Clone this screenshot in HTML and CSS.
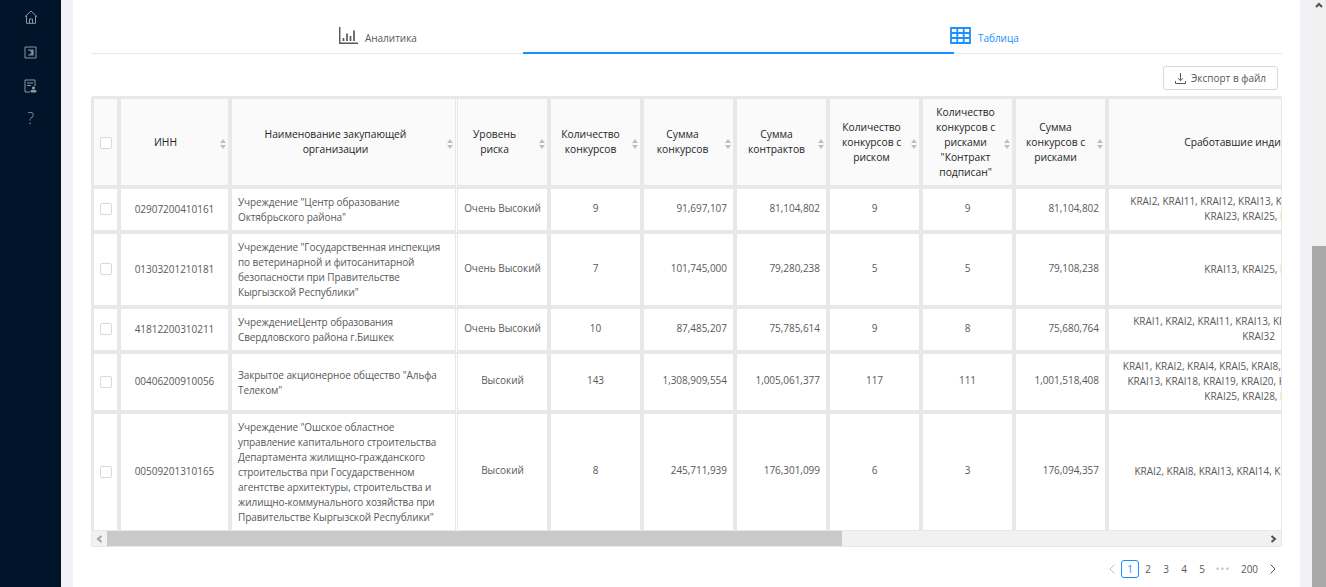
FILE: index.html
```html
<!DOCTYPE html>
<html lang="ru">
<head>
  <meta charset="UTF-8">
  <title>Таблица</title>
  <link rel="stylesheet" href="styles.css">
</head>
<body>
  <aside class="sidebar">
    <a class="side-item first">
      <svg width="14" height="14" viewBox="0 0 14 14" fill="none" stroke="currentColor"><path d="M.8 6.8 7 1l6.2 5.8M2.5 5.5v7.8h9V5.5M5.5 13.3V9h3v4.3"/></svg>
    </a>
    <a class="side-item">
      <svg width="13" height="13" viewBox="0 0 13 13" fill="none" stroke="currentColor"><path d="M1 1h11v11H1z"/><path d="M4 4h5v5H4M6.5 4.5 8.5 6.5 6.5 8.5" stroke-width="1.2"/></svg>
    </a>
    <a class="side-item">
      <svg width="13" height="14" viewBox="0 0 13 14" fill="none" stroke="currentColor"><path d="M6 13H1V1h10v6"/><path d="M3 4h6M3 6.5h4"/><circle cx="9.5" cy="9" r="1.2" fill="currentColor"/><path d="M7 13h5v-1.5H7z" fill="currentColor"/></svg>
    </a>
    <a class="side-item question">?</a>
  </aside>

  <main class="main">
    <div class="card">
      <nav class="tabs">
        <div class="tab tab-analytics">
          <svg width="19" height="17" viewBox="0 0 19 17" fill="none" stroke="currentColor"><path d="M.7 0v16.3H19" stroke-width="1.5"/><path d="M4.5 14V11M8 14V6.5M11.5 14V9M15 14V3.5" stroke-width="1.7"/></svg>
          <span>Аналитика</span>
        </div>
        <div class="tab tab-active">
          <svg width="21" height="17" viewBox="0 0 21 17" fill="none" stroke="currentColor"><path d="M1 1h19v15H1zM1 6h19M1 11h19M7.3 1v15M13.7 1v15" stroke-width="1.8"/></svg>
          <span>Таблица</span>
        </div>
        <div class="ink-bar"></div>
      </nav>

      <div class="toolbar">
        <button class="export-btn">
          <svg width="11" height="11" viewBox="0 0 11 11" fill="none" stroke="currentColor"><path d="M5.5 0v7.5M3 5.2l2.5 2.5L8 5.2M.5 8v2.5h10V8"/></svg>
          Экспорт в файл
        </button>
      </div>

      <div class="table-box">
        <div class="table-clip">
          <table class="data-table">
            <colgroup>
              <col class="col-check"><col class="col-inn"><col class="col-name">
              <col class="col-num"><col class="col-num"><col class="col-num"><col class="col-num"><col class="col-num"><col class="col-num"><col class="col-num">
              <col class="col-ind">
            </colgroup>
            <thead>
              <tr>
                <th><span class="check"></span></th>
                <th class="sortable pad-24">ИНН<span class="sorter"></span></th>
                <th class="sortable two-line name">Наименование закупающей организации<span class="sorter"></span></th>
                <th class="sortable two-line">Уровень риска<span class="sorter"></span></th>
                <th class="sortable two-line pad-16">Количество конкурсов<span class="sorter"></span></th>
                <th class="sortable two-line pad-18">Сумма конкурсов<span class="sorter"></span></th>
                <th class="sortable two-line pad-16">Сумма контрактов<span class="sorter"></span></th>
                <th class="sortable pad-12">Количество конкурсов с риском<span class="sorter"></span></th>
                <th class="sortable pad-10">Количество конкурсов с рисками "Контракт подписан"<span class="sorter"></span></th>
                <th class="sortable pad-16">Сумма конкурсов с рисками<span class="sorter"></span></th>
                <th class="pad-22">Сработавшие индикаторы</th>
              </tr>
            </thead>
            <tbody>
              <tr>
                <td><span class="check"></span></td>
                <td class="inn">02907200410161</td>
                <td class="name">Учреждение "Центр образование Октябрьского района"</td>
                <td class="center">Очень Высокий</td>
                <td class="center">9</td>
                <td class="right">91,697,107</td>
                <td class="right">81,104,802</td>
                <td class="center">9</td>
                <td class="center">9</td>
                <td class="right">81,104,802</td>
                <td class="ind">KRAI2, KRAI11, KRAI12, KRAI13, KRAI17, KRAI19, KRAI22,<br>KRAI23, KRAI25, KRAI28</td>
              </tr>
              <tr>
                <td><span class="check"></span></td>
                <td class="inn">01303201210181</td>
                <td class="name">Учреждение "Государственная инспекция по ветеринарной и фитосанитарной безопасности при Правительстве Кыргызской Республики"</td>
                <td class="center">Очень Высокий</td>
                <td class="center">7</td>
                <td class="right">101,745,000</td>
                <td class="right">79,280,238</td>
                <td class="center">5</td>
                <td class="center">5</td>
                <td class="right">79,108,238</td>
                <td class="ind">KRAI13, KRAI25, KRAI28</td>
              </tr>
              <tr>
                <td><span class="check"></span></td>
                <td class="inn">41812200310211</td>
                <td class="name">УчреждениеЦентр образования Свердловского района г.Бишкек</td>
                <td class="center">Очень Высокий</td>
                <td class="center">10</td>
                <td class="right">87,485,207</td>
                <td class="right">75,785,614</td>
                <td class="center">9</td>
                <td class="center">8</td>
                <td class="right">75,680,764</td>
                <td class="ind">KRAI1, KRAI2, KRAI11, KRAI13, KRAI17, KRAI23, KRAI25,<br>KRAI32</td>
              </tr>
              <tr>
                <td><span class="check"></span></td>
                <td class="inn">00406200910056</td>
                <td class="name">Закрытое акционерное общество "Альфа Телеком"</td>
                <td class="center">Высокий</td>
                <td class="center">143</td>
                <td class="right">1,308,909,554</td>
                <td class="right">1,005,061,377</td>
                <td class="center">117</td>
                <td class="center">111</td>
                <td class="right">1,001,518,408</td>
                <td class="ind">KRAI1, KRAI2, KRAI4, KRAI5, KRAI8, KRAI11, KRAI12, KRAI13,<br>KRAI13, KRAI18, KRAI19, KRAI20, KRAI21, KRAI22, KRAI23,<br>KRAI25, KRAI28, KRAI32</td>
              </tr>
              <tr>
                <td><span class="check"></span></td>
                <td class="inn">00509201310165</td>
                <td class="name">Учреждение "Ошское областное управление капитального строительства Департамента жилищно-гражданского строительства при Государственном агентстве архитектуры, строительства и жилищно-коммунального хозяйства при Правительстве Кыргызской Республики"</td>
                <td class="center">Высокий</td>
                <td class="center">8</td>
                <td class="right">245,711,939</td>
                <td class="right">176,301,099</td>
                <td class="center">6</td>
                <td class="center">3</td>
                <td class="right">176,094,357</td>
                <td class="ind">KRAI2, KRAI8, KRAI13, KRAI14, KRAI17, KRAI23, KRAI25</td>
              </tr>
            </tbody>
          </table>
        </div>
        <div class="h-scroll">
          <span class="h-arrow h-arrow-left">
            <svg width="7" height="8" viewBox="0 0 7 8" fill="none" stroke="currentColor" stroke-width="2"><path d="M5.5 1 2 4l3.5 3"/></svg>
          </span>
          <span class="h-thumb"></span>
          <span class="h-arrow h-arrow-right">
            <svg width="7" height="8" viewBox="0 0 7 8" fill="none" stroke="currentColor" stroke-width="2"><path d="M1.5 1 5 4 1.5 7"/></svg>
          </span>
        </div>
      </div>

      <ul class="pagination">
        <li class="page-arrow disabled">
          <svg width="6" height="10" viewBox="0 0 6 10" fill="none" stroke="currentColor"><path d="M5.5.5 1 5l4.5 4.5"/></svg>
        </li>
        <li class="page current">1</li>
        <li class="page">2</li>
        <li class="page">3</li>
        <li class="page">4</li>
        <li class="page">5</li>
        <li class="page jump">•••</li>
        <li class="page last">200</li>
        <li class="page-arrow">
          <svg width="6" height="10" viewBox="0 0 6 10" fill="none" stroke="currentColor"><path d="M.5.5 5 5 .5 9.5"/></svg>
        </li>
      </ul>
    </div>
  </main>

  <div class="page-scroll">
    <svg class="page-scroll-up" width="8" height="6" viewBox="0 0 8 6" fill="none" stroke="currentColor" stroke-width="2"><path d="M1 5 4 2l3 3"/></svg>
    <div class="page-scroll-thumb"></div>
  </div>
</body>
</html>
```

FILE: styles.css
```css
html, body {
  height: 100%;
}

body {
  margin: 0;
  height: 587px;
  overflow: hidden;
  display: flex;
  font-family: 'Open Sans', sans-serif;
  font-size: 10px;
  line-height: 15px;
  letter-spacing: -0.03px;
  color: #595959;
  background: #f0f2f5;
}

/* left menu */
.sidebar {
  width: 61px;
  flex: none;
  background: #001529;
  color: #8c96a1;
}

.side-item {
  height: 33px;
  display: flex;
  align-items: center;
  justify-content: center;
}

.side-item.first {
  margin-bottom: 3px;
}

.question {
  font-size: 16px;
  font-weight: 300;
}

.main {
  flex: 1;
  padding: 0 12px;
  min-width: 0;
}

.card {
  background: #fff;
  height: 587px;
  padding: 0 18px;
  box-sizing: border-box;
}

/* tabs */
.tabs {
  position: relative;
  height: 54px;
  box-sizing: border-box;
  border-bottom: 1px solid #e8e8e8;
  padding: 27px 0 0 248px;
  display: flex;
  align-items: flex-start;
}

.tab {
  display: flex;
  align-items: center;
  gap: 7px;
  height: 17px;
}

.tab span {
  padding-top: 5px;
}

.tab-analytics {
  width: 611px;
}

.tab-active {
  color: #1890ff;
}

.ink-bar {
  position: absolute;
  left: 432px;
  bottom: -1px;
  width: 431px;
  height: 2px;
  background: #1890ff;
}

/* export */
.toolbar {
  display: flex;
  justify-content: flex-end;
  padding: 12px 4px 6px 0;
}

.export-btn {
  height: 24px;
  width: 115px;
  padding: 0;
  border: 1px solid #d9d9d9;
  border-radius: 3px;
  background: #fff;
  color: #595959;
  font: inherit;
  display: flex;
  align-items: center;
  justify-content: center;
  gap: 5px;
}

/* table */
.table-box {
  border: 1px solid #e8e8e8;
  border-radius: 2px;
}

.table-clip {
  height: 434px;
  overflow: hidden;
}

.data-table {
  table-layout: fixed;
  width: 1320px;
  border-collapse: separate;
  border-spacing: 0;
  border-left: 2px solid #e8e8e8;
  border-top: 2px solid #e8e8e8;
}

.col-check { width: 27px; }
.col-inn { width: 111px; }
.col-name { width: 226px; }
.col-num { width: 93px; }
.col-ind { width: 303px; }

th, td {
  padding: 5px 6px 6px;
  border-right: 4px solid #e8e8e8;
  border-bottom: 4px solid #e8e8e8;
  font-weight: 400;
}

th {
  position: relative;
  padding: 6px 6px 5px;
  background: #fafafa;
  color: #262626;
  font-size: 10.3px;
  text-align: center;
}

th.two-line {
  padding-top: 5px;
  padding-bottom: 6px;
}

th.sortable {
  padding-right: 22px;
}

th.pad-10 { padding-right: 10px; }
th.pad-12 { padding-right: 12px; }
th.pad-16 { padding-right: 16px; }
th.pad-18 { padding-right: 18px; }
th.pad-22 { padding-right: 22px; }
th.pad-24 { padding-right: 24px; }

th.name, td.name {
  border-right: 3px double #e8e8e8;
}

td.name {
  padding: 6px 6px 5px;
  letter-spacing: -0.1px;
}

.sorter {
  position: absolute;
  right: 2px;
  top: 50%;
  margin-top: -3px;
  width: 6px;
  height: 10px;
}

.sorter::before, .sorter::after {
  content: "";
  position: absolute;
  left: 0;
  width: 6px;
  height: 4px;
  background: #bfbfbf;
}

.sorter::before {
  top: 0;
  clip-path: polygon(50% 0, 100% 100%, 0 100%);
}

.sorter::after {
  bottom: 0;
  clip-path: polygon(0 0, 100% 0, 50% 100%);
}

.check {
  display: block;
  width: 12px;
  height: 12px;
  border: 1px solid #d9d9d9;
  border-radius: 2px;
  box-sizing: border-box;
  background: #fff;
}

.inn {
  text-align: center;
}

.center, .right {
  padding-top: 4px;
  padding-bottom: 7px;
}

.center {
  text-align: center;
}

.right {
  text-align: right;
}

.ind {
  text-align: center;
  white-space: nowrap;
}

/* fake scrollbar under the table */
.h-scroll {
  height: 15px;
  display: flex;
  background: #f1f1f1;
}

.h-arrow {
  width: 15px;
  flex: none;
  display: flex;
  align-items: center;
  justify-content: center;
}

.h-arrow-left {
  color: #a3a3a3;
}

.h-arrow-right {
  margin-left: auto;
  color: #505050;
}

.h-thumb {
  width: 735px;
  background: #c9c9c9;
}

/* pagination */
.pagination {
  list-style: none;
  margin: 13px 0 0;
  padding: 0;
  display: flex;
  justify-content: flex-end;
  line-height: 18px;
  color: #595959;
}

.page, .page-arrow {
  width: 18px;
  height: 18px;
  box-sizing: border-box;
  display: flex;
  align-items: center;
  justify-content: center;
}

.page.current {
  border: 1px solid #1890ff;
  border-radius: 3px;
  color: #1890ff;
}

.page.jump {
  width: 24px;
  color: #bfbfbf;
  font-size: 10px;
  letter-spacing: 1px;
}

.page.last {
  width: 29px;
}

.page-arrow.disabled {
  color: #bfbfbf;
}

/* window scrollbar */
.page-scroll {
  position: relative;
  width: 14px;
  flex: none;
  background: #f1f1f1;
  padding-top: 246px;
  box-sizing: border-box;
}

.page-scroll-up {
  position: absolute;
  left: 3px;
  top: 2px;
  color: #505050;
}

.page-scroll-thumb {
  height: 341px;
  background: #a8a8a8;
}
```
